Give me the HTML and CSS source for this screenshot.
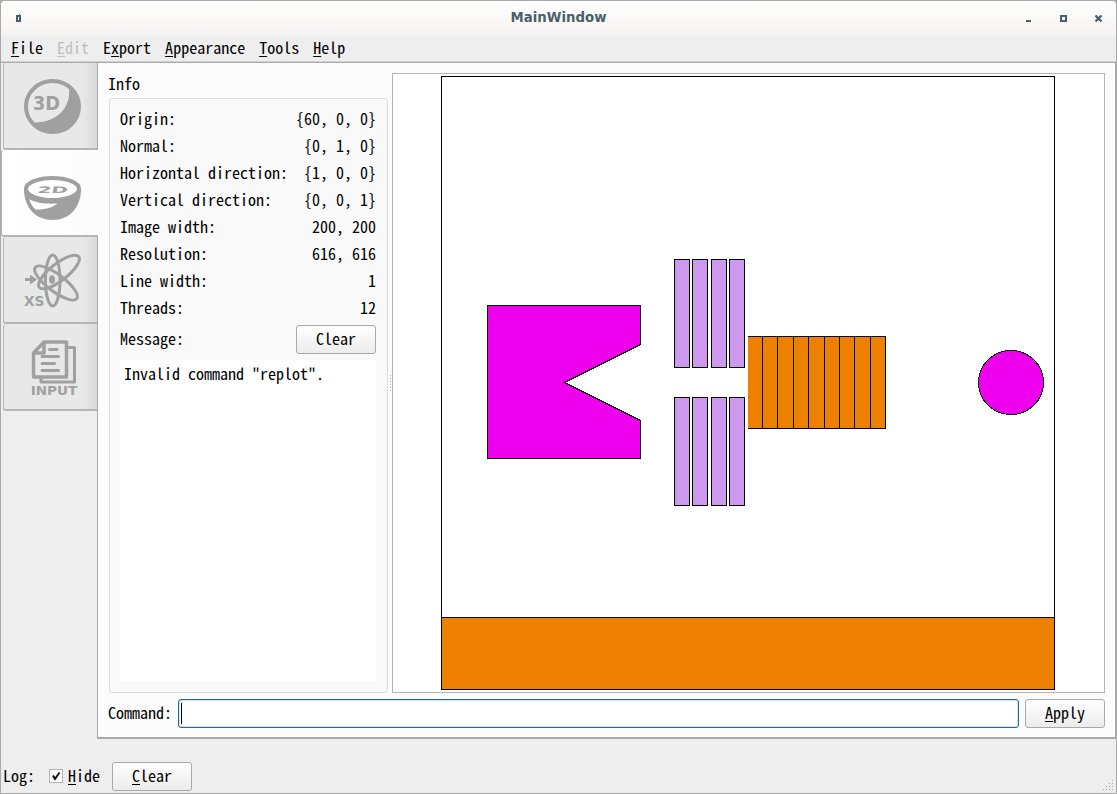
FILE: index.html
```
<!DOCTYPE html>
<html lang="en">
<head>
<meta charset="utf-8">
<title>MainWindow</title>
<link rel="stylesheet" href="styles.css">
</head>
<body>
<div class="window">
  <header class="titlebar">
    <svg class="sysicon" width="5" height="8" viewBox="0 0 5 8" shape-rendering="crispEdges"><path d="M0 1h3v-1h1v1h1v7h-5zM2 3v3h1v-3z" fill="#4a5f68" fill-rule="evenodd"/></svg>
    <h1>MainWindow</h1>
    <svg class="controls" width="76" height="9" viewBox="0 0 76 9"><path d="M0 5h5v2h-5z" fill="#4a5f68"/><path d="M35 1h5v5h-5z" fill="none" stroke="#4a5f68" stroke-width="2"/><path d="M69.500 .5l6 6m0-6l-6 6" stroke="#4a5f68" stroke-width="2.200"/></svg>
  </header>
  <nav class="menubar">
    <span><u>F</u>ile</span><span class="disabled"><u>E</u>dit</span><span>E<u>x</u>port</span><span><u>A</u>ppearance</span><span><u>T</u>ools</span><span><u>H</u>elp</span>
  </nav>
  <main class="body">
    <aside class="tabs">
      <div class="tab">
        <svg width="94" height="85" viewBox="4 63 94 85"><ellipse cx="52.500" cy="106.500" rx="26.500" ry="25.500" fill="none" stroke="#a0a0a0" stroke-width="4"/><path d="M69 89C71 107 57 123 34 122.500C43 136 64 137 74 124C83 112 81 96 69 89Z" fill="#a0a0a0"/><text x="33" y="109.500" class="t3d" textLength="27" lengthAdjust="spacingAndGlyphs">3D</text></svg>
      </div>
      <div class="tab active">
        <svg width="94" height="85" viewBox="4 150 94 85"><path d="M24 189C24 208 36 220 52.500 220S81 208 81 189Z" fill="#a0a0a0"/><path d="M29 199C37 203.500 47 204 57.500 203.500C52 208 45 209.500 35.500 209.500C32.500 207 30.500 203 29 199Z" fill="#fff"/><ellipse cx="52.500" cy="189" rx="26.500" ry="11" fill="#fff" stroke="#a0a0a0" stroke-width="4"/><text transform="translate(37 192.500) skewX(-12) scale(1.650 .75)" class="t2d">2D</text></svg>
      </div>
      <div class="tab">
        <svg width="94" height="85" viewBox="4 237 94 85"><g fill="none" stroke="#a0a0a0" stroke-width="3"><ellipse cx="52.700" cy="280.500" rx="7.300" ry="25.500"/><ellipse cx="59" cy="272" rx="25" ry="8.500" transform="rotate(-38 59 272)"/><ellipse cx="56" cy="283" rx="26" ry="8.500" transform="rotate(37 56 283)"/></g><ellipse cx="52" cy="279.500" rx="3" ry="4.300" fill="#a0a0a0"/><path d="M25 278h5v-3.500l7 5-7 5v-3.500h-5z" fill="#a0a0a0"/><text x="24" y="306" class="txs" textLength="20.500" lengthAdjust="spacingAndGlyphs">XS</text></svg>
      </div>
      <div class="tab">
        <svg width="94" height="85" viewBox="4 324 94 85"><g fill="none" stroke="#a0a0a0" stroke-width="3"><path d="M44 342H66.500V377H33.500V353Z M44 342V353H33.500" stroke-width="3.500" stroke-linejoin="round"/><path d="M68 347.500h6.500V382H41v-5" stroke-linejoin="round"/><path d="M49.500 349.500h7.500M42 356.500h16.500M42 363.500h12.500M42 370.500h16.500" stroke-linecap="round"/></g><text x="30.700" y="394.500" class="tin" textLength="46.500" lengthAdjust="spacingAndGlyphs">INPUT</text></svg>
      </div>
    </aside>
    <section class="pane">
      <div class="content">
        <div class="info">
          <h2>Info</h2>
          <div class="group">
            <dl>
              <div><dt>Origin:</dt><dd>{60, 0, 0}</dd></div>
              <div><dt>Normal:</dt><dd>{0, 1, 0}</dd></div>
              <div><dt>Horizontal direction:</dt><dd>{1, 0, 0}</dd></div>
              <div><dt>Vertical direction:</dt><dd>{0, 0, 1}</dd></div>
              <div><dt>Image width:</dt><dd>200, 200</dd></div>
              <div><dt>Resolution:</dt><dd>616, 616</dd></div>
              <div><dt>Line width:</dt><dd>1</dd></div>
              <div><dt>Threads:</dt><dd>12</dd></div>
            </dl>
            <div class="message"><span>Message:</span><button>Clear</button></div>
            <div class="output">Invalid command "replot".</div>
          </div>
        </div>
        <div class="splitter"><i></i><i></i><i></i><i></i><i></i><i></i></div>
        <div class="plot">
          <svg width="711" height="618" viewBox="393 74 711 618" shape-rendering="crispEdges" stroke="#000">
            <rect x="441.500" y="76.500" width="613" height="613" fill="#fff"/>
            <rect x="441.500" y="617.500" width="613" height="72" fill="#ee8000"/>
            <path d="M487.500 305.500H640.500V344.500L564.500 382.500L640.500 420.500V458.500H487.500Z" fill="#ee00ee"/>
            <g fill="#cc99ee">
              <path d="M674.500 259.500h15v108h-15zM692.500 259.500h15v108h-15zM711.500 259.500h15v108h-15zM729.500 259.500h15v108h-15z"/>
              <path d="M674.500 397.500h15v108h-15zM692.500 397.500h15v108h-15zM711.500 397.500h15v108h-15zM729.500 397.500h15v108h-15z"/>
            </g>
            <path d="M748 336.500H885.500V428.500H748" fill="#ee8000"/>
            <path d="M762.500 336v92M777.500 336v92M793.500 336v92M808.500 336v92M824.500 336v92M839.500 336v92M854.500 336v92M870.500 336v92"/>
            <ellipse cx="1011" cy="382.500" rx="32.500" ry="32" fill="#ee00ee"/>
          </svg>
        </div>
      </div>
      <div class="command"><label>Command:</label><div class="input"><i class="caret"></i></div><button><u>A</u>pply</button></div>
    </section>
  </main>
  <footer class="log">
    <span class="loglabel">Log:</span>
    <span class="check"><svg width="12" height="12" viewBox="0 0 12 12"><path d="M3 5.500L5 9L9.500 2.500" fill="none" stroke="#111" stroke-width="2"/></svg></span>
    <span class="hide"><u>H</u>ide</span>
    <button><u>C</u>lear</button>
    <svg class="grip" width="11" height="11" viewBox="0 0 11 11" shape-rendering="crispEdges"><path d="M9 0h1v1h-1zM6 3h1v1h-1zM9 3h1v1h-1zM3 6h1v1h-1zM6 6h1v1h-1zM9 6h1v1h-1zM0 9h1v1h-1zM3 9h1v1h-1zM6 9h1v1h-1zM9 9h1v1h-1z" fill="#aaa"/></svg>
  </footer>
</div>
</body>
</html>
```
FILE: styles.css
```
* { box-sizing: border-box; }
body { margin: 0; background: #aaa; color: #000; font: 16px/27px "Noto Sans Mono CJK JP", "DejaVu Sans Mono", monospace; white-space: nowrap; }
h1, h2, dl, dd { margin: 0; }
u { text-decoration-thickness: 1px; text-underline-offset: 2px; text-decoration-skip-ink: none; }
.window { width: 1117px; height: 794px; border: 1px solid #a9a9a9; border-radius: 5px 5px 0 0; background: #eee; display: flex; flex-direction: column; overflow: hidden; }
.titlebar { height: 35px; flex: none; background: linear-gradient(#fff, #f4f3f1); display: flex; align-items: center; justify-content: space-between; padding: 0 14px 0 15px; }
.titlebar h1 { font: bold 13.3px/32px "DejaVu Sans", sans-serif; color: #4a5f68; padding-left: 70px; margin-top: -2px; }
.sysicon { margin-top: -1px; }
.controls { margin-top: 2px; }
.menubar { height: 26px; flex: none; display: flex; gap: 14px; padding-left: 10px; line-height: 23px; border-bottom: 1px solid #d0d0d0; }
.disabled { color: #bebebe; }
.body { display: flex; height: 677px; flex: none; }
.tabs { width: 96px; padding-left: 2px; border-top: 1px solid #aaa; flex: none; }
.tab { height: 87px; border: 1px solid #b4b4b4; border-width: 0 0 2px 1px; border-radius: 3px 0 0 3px; background: linear-gradient(90deg, #e8e8e8 85%, #d9d9d9); }
.tab svg { display: block; }
.tab.active { margin-left: -2px; margin-right: -1px; padding-left: 2px; background: linear-gradient(90deg, #fff, #fcfcfc); position: relative; }
.pane { width: 1019px; border: 1px solid #aaa; border-bottom-width: 2px; background: #fcfcfc; padding: 10px 10px 9px; flex: none; }
.content { display: flex; height: 620px; }
.info { width: 280px; padding-left: 1px; }
.info h2 { font: inherit; line-height: 20px; height: 25px; margin-left: -1px; }
.group { height: 595px; border: 1px solid #ddd; border-radius: 3px; background: #f9f9f9; padding: 6px 11px 11px 10px; }
dl > div, .message { display: flex; justify-content: space-between; }
.message { height: 29px; margin: 4px 0 6px; line-height: 27px; }
button { width: 80px; height: 29px; border: 1px solid #a9a9a9; border-radius: 3px; background: linear-gradient(#fff, #ececec); font: inherit; line-height: 25px; padding: 0 0 2px; color: #000; }
.output { height: 321px; background: #fff; padding: 0 4px; }
.splitter { width: 4px; display: flex; flex-direction: column; justify-content: center; gap: 2px; padding-left: 2px; }
.splitter i { width: 1px; height: 1px; background: #aaa; }
.plot { width: 713px; height: 620px; border: 1px solid #b4b4b4; background: #fff; }
.plot svg { display: block; }
.command { display: flex; height: 29px; margin-top: 6px; line-height: 27px; }
.command label { width: 70px; }
.input { width: 841px; margin-right: 6px; border: 1px solid #1f6a99; border-radius: 3px; background: #fff; box-shadow: inset 0 0 0 1px #d5e5ee; padding: 3px 2px; }
.caret { display: block; width: 1px; height: 21px; background: #000; }
.log { display: flex; align-items: center; height: 54px; padding: 20px 0 0 2px; }
.loglabel { margin-top: -1px; }
.check { width: 14px; height: 14px; border: 1px solid #b4b4b4; background: #fff; margin-left: 14px; display: flex; }
.hide { margin: -1px 12px 0 5px; }
.grip { margin: 19px 2px 0 auto; }
.t3d, .t2d, .txs, .tin { font-family: "DejaVu Sans", sans-serif; font-weight: bold; fill: #a0a0a0; }
.t3d { font-size: 19.5px; }
.t2d { font-size: 12px; }
.txs { font-size: 13.5px; }
.tin { font-size: 12px; }
```
